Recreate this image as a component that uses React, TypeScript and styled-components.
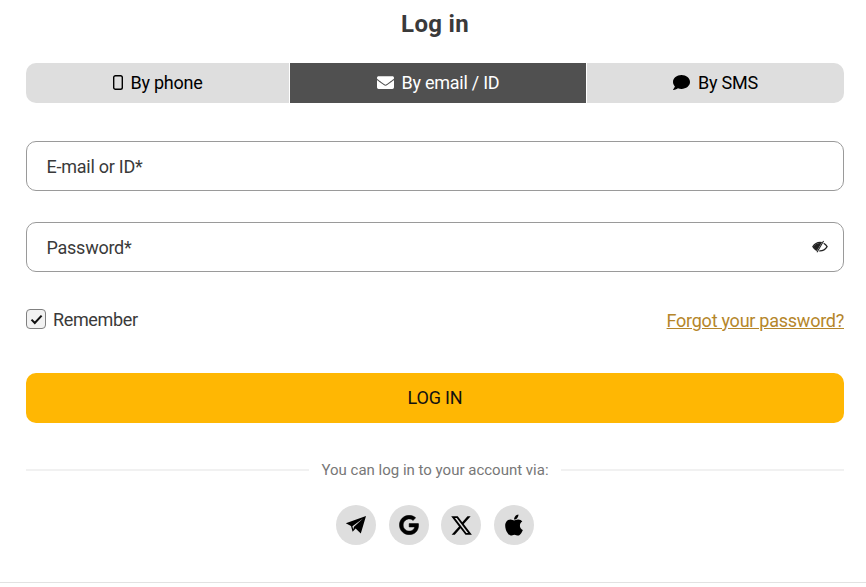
import React from "react";
import styled, { createGlobalStyle } from "styled-components";
import { FaEnvelope, FaComment, FaGoogle, FaApple } from "react-icons/fa";
import { FaXTwitter } from "react-icons/fa6";

const Global = createGlobalStyle`
  html, body { margin: 0; padding: 0; background: #fff; }
  body { font-family: Roboto, "Liberation Sans", sans-serif; color: #3a3a3a; }
  * { box-sizing: border-box; }
`;

const Page = styled.div`
  width: 866px;
  height: 587px;
  overflow: hidden;
  padding: 0 22px 0 26px;
  display: flex;
  flex-direction: column;
`;

const Title = styled.h1`
  margin: 0;
  height: 63px;
  padding-top: 10px;
  font-size: 24px;
  line-height: 28px;
  font-weight: 700;
  letter-spacing: 0.3px;
  text-align: center;
  color: #3a3a3a;
`;

const Tabs = styled.div`
  display: grid;
  grid-template-columns: 263px 296px 257px;
  gap: 1px;
  height: 40px;
  border-radius: 10px;
  overflow: hidden;
`;

const Tab = styled.div<{ $active?: boolean }>`
  display: flex;
  align-items: center;
  justify-content: center;
  gap: 8px;
  padding-bottom: 2px;
  font-size: 18px;
  letter-spacing: -0.25px;
  background: ${(p) => (p.$active ? "#505050" : "#dedede")};
  color: ${(p) => (p.$active ? "#fff" : "#000")};
`;

const Form = styled.div`
  display: flex;
  flex-direction: column;
  gap: 31px;
  margin-top: 38px;
`;

const Field = styled.div`
  height: 50px;
  border: 1px solid #9a9a9a;
  border-radius: 10px;
  padding: 0 15px 0 19.5px;
  display: flex;
  align-items: center;
  justify-content: space-between;
  font-size: 18px;
  letter-spacing: -0.25px;
  color: #3a3a3a;
`;

const OptionsRow = styled.div`
  display: flex;
  align-items: center;
  justify-content: space-between;
  height: 24px;
  margin-top: 36px;
`;

const RememberLabel = styled.label`
  display: flex;
  align-items: center;
  gap: 7px;
  padding-bottom: 2px;
  font-size: 18px;
  color: #3a3a3a;
  letter-spacing: -0.35px;
`;

const CheckBox = styled.span`
  width: 20px;
  height: 20px;
  border: 1px solid #808080;
  border-radius: 4px;
  background: #f2f2f2;
  display: flex;
  align-items: center;
  justify-content: center;
`;

const ForgotLink = styled.a`
  font-size: 18px;
  color: #b5862a;
  text-decoration: underline;
  letter-spacing: -0.25px;
`;

const Submit = styled.button`
  display: block;
  width: 100%;
  height: 50px;
  margin-top: 41px;
  padding: 0 0 2px;
  border: 0;
  border-radius: 10px;
  background: #ffb703;
  color: #111;
  font-family: inherit;
  font-size: 18px;
  letter-spacing: -0.2px;
`;

const Divider = styled.div`
  display: flex;
  align-items: center;
  gap: 12px;
  height: 20px;
  margin-top: 37px;
  font-size: 15px;
  color: #777;
  &::before, &::after {
    content: "";
    flex: 1;
    height: 2px;
    background: #f1f1f1;
  }
`;

const Socials = styled.div`
  display: flex;
  justify-content: center;
  gap: 12.5px;
  margin-top: 25px;
`;

const Social = styled.div`
  width: 40px;
  height: 40px;
  border-radius: 50%;
  background: #dedede;
  display: flex;
  align-items: center;
  justify-content: center;
  color: #000;
`;

const FooterRule = styled.div`
  height: 1px;
  margin: 37px -22px 0 -26px;
  background: #e2e2e2;
`;

const PhoneIcon = () => (
  <svg width="10" height="15" viewBox="0 0 10 15" fill="none">
    <rect x="0.7" y="0.7" width="8.6" height="13.6" rx="1.8" stroke="#000" strokeWidth="1.4" />
  </svg>
);

const EyeIcon = () => (
  <svg width="16" height="14" viewBox="0 0 18 15.75" fill="none">
    <path d="M1 7.5C3 4.3 5.8 2.7 9 2.7s6 1.6 8 4.8c-2 3.2-4.8 4.8-8 4.8s-6-1.6-8-4.8Z" stroke="#222" strokeWidth="1.4" />
    <path d="M1.6 7.5C3.4 4.7 5.8 3.3 9 3.3h2.4L7 12C4.6 11.4 3 9.7 1.6 7.5Z" fill="#222" />
    <path d="M13.4 1 5.4 14.6" stroke="#fff" strokeWidth="2.2" />
    <path d="M13 1.2 5.6 13.8" stroke="#222" strokeWidth="1.2" />
  </svg>
);

const CheckMark = () => (
  <svg width="13" height="11" viewBox="0 0 13 11" fill="none">
    <path d="M1.5 5.6 4.8 9 11.6 1.6" stroke="#111" strokeWidth="2" />
  </svg>
);

const PlaneIcon = () => (
  <svg width="22" height="20" viewBox="0 0 22 20" fill="#000">
    <path d="M21 1 0.8 8.2 6 11 7.6 16.8 10.6 13.6 15.8 18.4 Z" />
    <path d="M18 3.6 7.4 11.2 8.2 14.4 9 11.8 Z" fill="#dedede" />
  </svg>
);

export default function App() {
  return (
    <Page>
      <Global />
      <Title>Log in</Title>
      <Tabs>
        <Tab><PhoneIcon />By phone</Tab>
        <Tab $active><FaEnvelope size={17} />By email / ID</Tab>
        <Tab><FaComment size={17} />By SMS</Tab>
      </Tabs>
      <Form>
        <Field>E-mail or ID*</Field>
        <Field>Password*<EyeIcon /></Field>
      </Form>
      <OptionsRow>
        <RememberLabel>
          <CheckBox><CheckMark /></CheckBox>
          Remember
        </RememberLabel>
        <ForgotLink>Forgot your password?</ForgotLink>
      </OptionsRow>
      <Submit>LOG IN</Submit>
      <Divider>You can log in to your account via:</Divider>
      <Socials>
        <Social><PlaneIcon /></Social>
        <Social><FaGoogle size={20} strokeWidth={14} /></Social>
        <Social><FaXTwitter size={23} /></Social>
        <Social><FaApple size={24} /></Social>
      </Socials>
      <FooterRule />
    </Page>
  );
}
